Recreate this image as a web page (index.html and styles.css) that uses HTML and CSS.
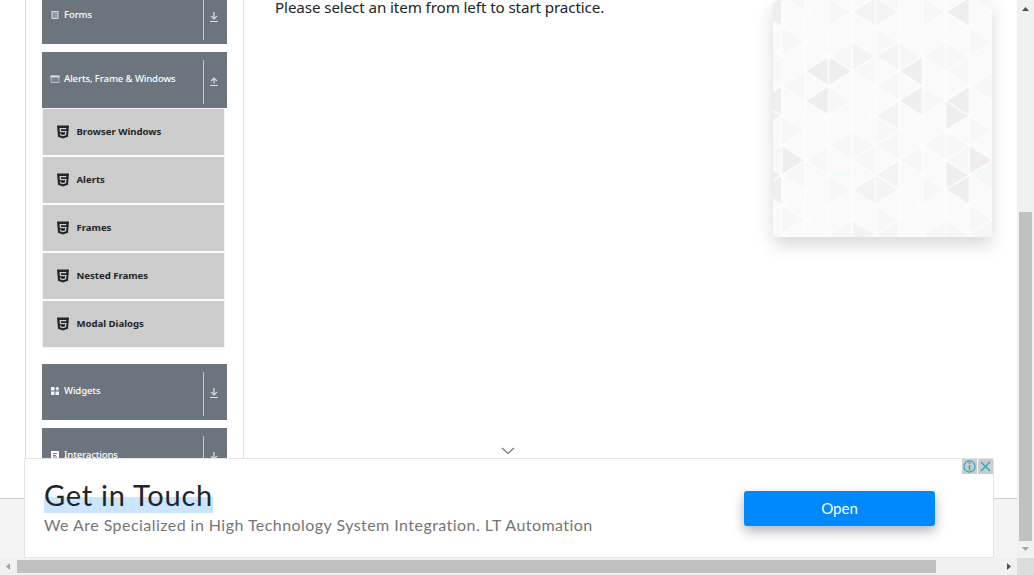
FILE: index.html
```html
<!DOCTYPE html>
<html lang="en">
<head>
<meta charset="utf-8">
<title>Practice</title>
<link rel="stylesheet" href="styles.css">
</head>
<body>
<svg class="defs" width="0" height="0">
  <defs>
    <symbol id="down" viewBox="0 0 10 12"><path d="M5 1v6" stroke="#c6cacd" stroke-width="1.600"/><path d="M2 5l3 3 3-3M1 10.500h8" fill="none" stroke="#dcdfe1" stroke-width="1.100"/></symbol>
    <symbol id="up" viewBox="0 0 10 12"><path d="M5 8.500V4" stroke="#c6cacd" stroke-width="1.600"/><path d="M2 6l3-3 3 3M1 10.500h8" fill="none" stroke="#dcdfe1" stroke-width="1.100"/></symbol>
    <symbol id="html5" viewBox="0 0 12 14"><path d="M0 .5h12l-1 11.2L6 13.500l-5-1.800z" fill="#212529"/><path d="M9.300 3.500H3.200l.25 3.200h5.400l-.35 3.200L6 10.700 3.500 9.900l-.1-1.200" fill="none" stroke="#ccc" stroke-width="1.250"/></symbol>
  </defs>
</svg>
<div class="window">
  <div class="view">
    <main class="content">
      <nav class="sidebar">
        <div class="head head-first">
          <svg class="hicon" viewBox="0 0 10 10"><rect x="2" y="1.500" width="6" height="7" fill="#959ca2" stroke="#d5d8da"/></svg>
          <span class="label">Forms</span><span class="toggle"><svg><use href="#down"/></svg></span>
        </div>
        <div class="head">
          <svg class="hicon" viewBox="0 0 10 10"><path d="M1 2h8v6.500H1z" fill="#7c848b" stroke="#b9bec2"/><path d="M.5 2.500h9" stroke="#dcdfe1" stroke-width="1.800"/></svg>
          <span class="label">Alerts, Frame &amp; Windows</span><span class="toggle"><svg><use href="#up"/></svg></span>
        </div>
        <ul class="items">
          <li><svg><use href="#html5"/></svg><span>Browser Windows</span></li>
          <li><svg><use href="#html5"/></svg><span>Alerts</span></li>
          <li><svg><use href="#html5"/></svg><span>Frames</span></li>
          <li><svg><use href="#html5"/></svg><span>Nested Frames</span></li>
          <li><svg><use href="#html5"/></svg><span>Modal Dialogs</span></li>
        </ul>
        <div class="head">
          <svg class="hicon" viewBox="0 0 10 10"><path d="M1 1h3.500v3.500H1zM1 5.500h3.500V9H1zM5.500 5.500H9V9H5.500zM7.300.6l2 2.100-2 2.100-2-2.100z" fill="#f1f2f3"/></svg>
          <span class="label">Widgets</span><span class="toggle"><svg><use href="#down"/></svg></span>
        </div>
        <div class="head">
          <svg class="hicon" viewBox="0 0 10 10"><rect x="1" y="1" width="8" height="8" fill="#fff"/><path d="M3 3.500h4M3 5.500h3M3 7h4" stroke="#6c757d" stroke-width=".9"/></svg>
          <span class="label">Interactions</span><span class="toggle"><svg><use href="#down"/></svg></span>
        </div>
      </nav>
      <p class="message">Please select an item from left to start practice.</p>
      <aside class="banner">
        <svg width="219" height="237">
          <defs>
            <path id="l" d="M0 0L23.450-14.830V14.830z"/>
            <path id="r" d="M0 0L-23.450-14.830V14.830z"/>
            <pattern id="mesh" width="46.900" height="29.660" patternUnits="userSpaceOnUse" patternTransform="translate(8.700 26.700)">
              <path d="M0 0V29.660M46.900 0V29.660M23.450 0V29.660M0 0L46.900 29.660M0 29.660L46.900 0" fill="none" stroke="#fefefe" stroke-width="1.300"/>
            </pattern>
            <pattern id="tint" width="93.800" height="88.980" patternUnits="userSpaceOnUse" patternTransform="translate(8.700 26.700)">
              <g fill="#f7f7f7"><use href="#r" x="23.450" y="14.830"/><use href="#l" x="46.900" y="29.660"/><use href="#r" x="93.800" y="29.660"/><use href="#l" x="23.450" y="44.490"/><use href="#r" x="70.350" y="74.150"/><use href="#l" x="0" y="59.320"/><use href="#l" x="70.350" y="44.490"/></g>
            </pattern>
          </defs>
          <rect width="219" height="237" fill="#fafafa"/>
          <rect width="219" height="237" fill="url(#tint)"/>
          <g fill="#f3f3f3">
            <use href="#l" x="79" y="12"/><use href="#r" x="126" y="12"/>
            <use href="#r" x="102.500" y="56.300"/><use href="#l" x="102.500" y="56.300"/>
            <use href="#l" x="102.500" y="115.600"/><use href="#l" x="102.500" y="174.900"/>
            <use href="#l" x="79" y="190"/><use href="#r" x="126" y="190"/><use href="#r" x="102.500" y="234.200"/>
          </g>
          <g fill="#f6f6f6">
            <use href="#r" x="149.400" y="56.300"/><use href="#l" x="102.500" y="145.300"/>
            <use href="#l" x="102.500" y="234.200"/><use href="#l" x="196.300" y="234.200"/>
          </g>
          <g fill="#eee">
            <use href="#l" x="-14.700" y="12"/><use href="#l" x="172.900" y="12"/>
            <use href="#l" x="32.100" y="71.200"/><use href="#r" x="79" y="71.200"/><use href="#l" x="126" y="71.200"/>
            <use href="#l" x="-14.700" y="100.800"/><use href="#l" x="32.100" y="100.800"/><use href="#l" x="126" y="100.800"/><use href="#l" x="172.900" y="100.800"/>
            <use href="#r" x="8.700" y="115.600"/><use href="#r" x="196.300" y="115.600"/>
            <use href="#r" x="32.100" y="160.200"/><use href="#r" x="219.800" y="160.200"/>
            <use href="#r" x="8.700" y="175"/><use href="#r" x="196.300" y="175"/>
            <use href="#l" x="-14.700" y="190"/><use href="#l" x="172.900" y="190"/>
          </g>
          <rect width="219" height="237" fill="url(#mesh)"/>
          <path d="M18 174.800h13M61 174.500h18M206 174.800h13" stroke="#ecfcfc" stroke-width="1.500"/>
        </svg>
      </aside>
    </main>
    <footer class="footer"></footer>
    <section class="ad">
      <svg class="chevron" viewBox="0 0 14 8"><path d="M1 1l6 5.500L13 1" fill="none" stroke="#757575" stroke-width="1.200"/></svg>
      <div class="copy">
        <h2><span>Get in Touch</span></h2>
        <p>We Are Specialized in High Technology System Integration. LT Automation</p>
      </div>
      <div class="open">Open</div>
      <div class="choices">
        <svg viewBox="0 0 15 15"><circle cx="7.500" cy="7.500" r="5.600" fill="none" stroke="#16aecb" stroke-width="1.100"/><path d="M7.500 6.300v5M7.500 3.600v1.500" stroke="#16aecb" stroke-width="1.500"/></svg>
        <svg viewBox="0 0 15 15"><path d="M3 3l9 9M12 3l-9 9" stroke="#16aecb" stroke-width="1.400"/></svg>
      </div>
    </section>
  </div>
  <div class="vbar">
    <svg viewBox="0 0 17 17"><path d="M5 11h7L8.500 7z" fill="#505050"/></svg>
    <i></i>
    <svg viewBox="0 0 17 17"><path d="M5 6h7L8.500 10z" fill="#a3a3a3"/></svg>
  </div>
  <div class="hbar">
    <svg viewBox="0 0 17 17"><path d="M10 5v7L6 8.500z" fill="#a3a3a3"/></svg>
    <i></i>
    <svg viewBox="0 0 17 17"><path d="M7 5v7l4-3.500z" fill="#505050"/></svg>
  </div>
  <div class="corner"></div>
</div>
</body>
</html>
```
FILE: styles.css
```css
* { box-sizing: border-box; }
body { margin: 0; overflow: hidden; background: #fff; font-family: "Noto Sans", "Open Sans", sans-serif; color: #212529; }
svg { display: block; }
.defs { position: absolute; }
.window { display: grid; grid-template: 558px 17px / 1017px 17px; width: 1034px; height: 575px; }
.view { position: relative; overflow: hidden; display: flex; flex-direction: column; }
.content { display: flex; height: 498px; flex: none; padding-left: 25px; }
.sidebar { width: 219px; height: 498px; flex: none; overflow: hidden; border: solid #dcdcdc; border-width: 0 1px; padding: 0 16px; }
.head { display: flex; height: 56px; width: 185px; margin-bottom: 8px; padding: 8px 0 4px 8px; background: #6c757d; color: #fff; font-size: 9.600px; font-weight: 500; }
.head-first { margin-top: -12px; }
.hicon { width: 10px; height: 10px; margin-top: 14px; }
.label { flex: 1; margin-left: 4px; line-height: 14px; padding-top: 12px; letter-spacing: -.13px; white-space: nowrap; }
.toggle { width: 24px; border-left: 1px solid #c6c9cc; padding: 15px 0 0 5px; }
.toggle svg { width: 10px; height: 12px; }
.items { list-style: none; margin: -8px 0 16px; padding: 0; width: 183px; border: 1px solid #f4f4f4; display: grid; gap: 2px; background: #f9f9f9; }
.items li { height: 46px; display: flex; align-items: center; gap: 7.500px; padding-left: 14px; background: #ccc; font-size: 9.600px; font-weight: 700; }
.items span { padding-bottom: 2px; letter-spacing: -.02px; }
.items svg { width: 12px; height: 14px; }
.message { margin: 0 0 0 31px; width: 498px; font-size: 15.200px; line-height: 15px; letter-spacing: -.11px; white-space: nowrap; }
.banner { width: 219px; height: 237px; box-shadow: 0 8px 16px rgba(0,0,0,.15); }
.footer { flex: 1; background: #f4f4f4; border-top: 1px solid #ccc; }
.ad { position: absolute; left: 24px; top: 458px; width: 970px; height: 100px; background: #fff; border: 1px solid #e4e4e4; display: flex; font-family: Lato, sans-serif; font-variant-ligatures: none; }
.chevron { position: absolute; left: 476px; top: -12px; width: 14px; height: 8px; }
.copy { padding: 19px 0 0 19px; width: 719px; }
.copy h2 { margin: 0; height: 34px; font-size: 29px; line-height: 34px; font-weight: 400; white-space: nowrap; }
.copy h2 span { display: inline-block; line-height: 32px; padding-bottom: 2px; background: linear-gradient(transparent 18px, #cce5ff 18px); letter-spacing: .75px; }
.copy p { margin: 3px 0 0; font-size: 16px; line-height: 20px; letter-spacing: .45px; color: #757575; white-space: nowrap; }
.open { width: 191px; height: 35px; margin-top: 32px; border-radius: 3px; background: #08f; color: #fff; text-align: center; font-size: 15px; line-height: 34px; box-shadow: 0 5px 12px rgba(30,30,60,.35); }
.choices { position: absolute; right: 0; top: 0; display: flex; gap: 1px; }
.choices svg { width: 15px; height: 15px; background: #ccc; }
.vbar { display: flex; flex-direction: column; background: #f1f1f1; }
.vbar svg, .hbar svg { width: 17px; height: 17px; flex: none; }
.vbar i { width: 13px; height: 329px; margin: 195px 0 0 2px; background: #c1c1c1; }
.hbar { display: flex; background: #f1f1f1; }
.hbar i { width: 919px; height: 13px; margin: 2px 64px 0 0; background: #c1c1c1; }
.corner { background: #dcdcdc; }
```
